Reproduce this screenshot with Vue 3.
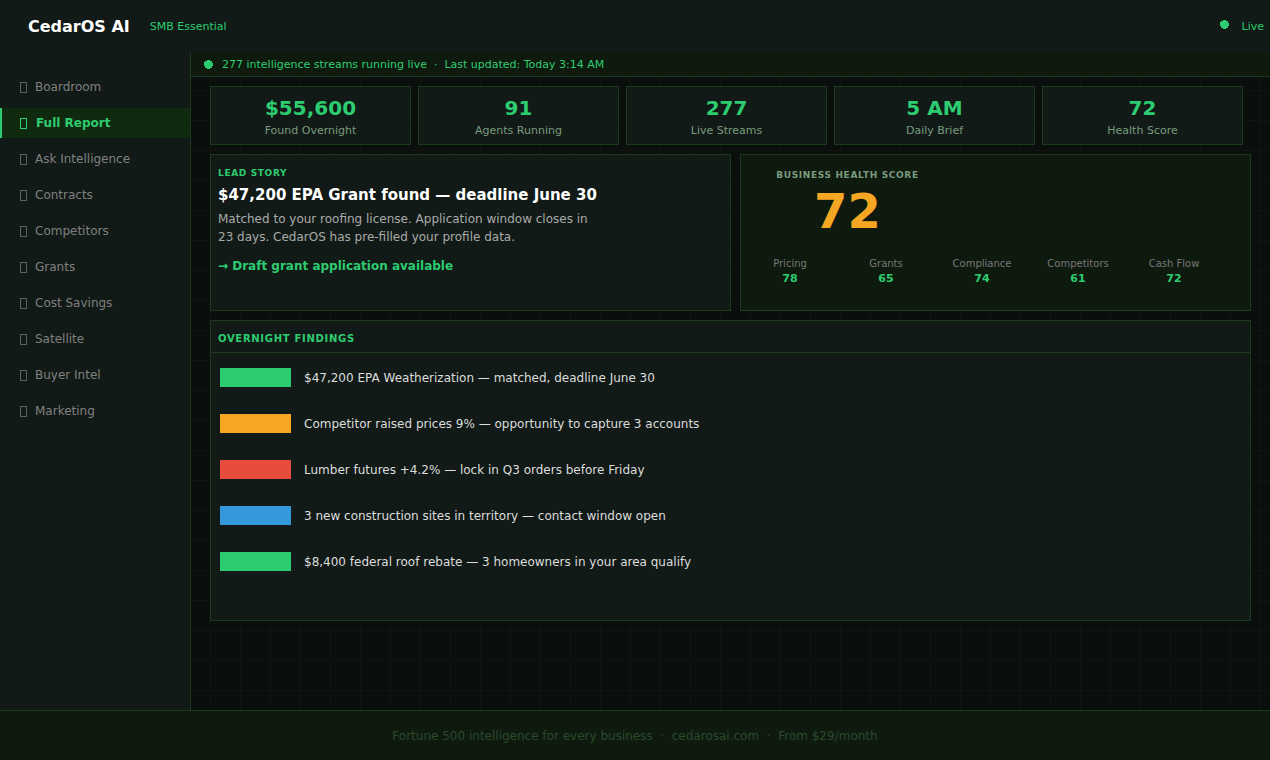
<template>
  <div class="app">
    <header class="topbar">
      <div class="brand">CedarOS AI</div>
      <div class="plan">SMB Essential</div>
      <div class="live">
        <svg class="dot" viewBox="0 0 9 9" shape-rendering="crispEdges"><circle cx="4.5" cy="4.5" r="4.5" /></svg>
        <span>Live</span>
      </div>
    </header>

    <div class="body-row">
      <aside class="sidebar">
        <a
          v-for="item in navItems"
          :key="item"
          class="nav-item"
          :class="{ active: item === 'Full Report' }"
        >
          <span class="nav-icon"></span>
          <span>{{ item }}</span>
        </a>
      </aside>

      <div class="content">
        <div class="ticker">
          <svg class="dot" viewBox="0 0 9 9" shape-rendering="crispEdges"><circle cx="4.5" cy="4.5" r="4.5" /></svg>
          <span>277 intelligence streams running live &nbsp;·&nbsp; Last updated: Today 3:14 AM</span>
        </div>

        <main class="main">
          <section class="tiles">
            <div v-for="tile in tiles" :key="tile.label" class="tile">
              <div class="tile-value">{{ tile.value }}</div>
              <div class="tile-label">{{ tile.label }}</div>
            </div>
          </section>

          <section class="panels">
            <div class="lead">
              <div class="lead-kicker">LEAD STORY</div>
              <h2 class="lead-title">$47,200 EPA Grant found — deadline June 30</h2>
              <p class="lead-text">
                Matched to your roofing license. Application window closes in
                23 days. CedarOS has pre-filled your profile data.
              </p>
              <div class="lead-action">→ Draft grant application available</div>
            </div>

            <div class="health">
              <div class="health-head">
                <div class="health-label">BUSINESS HEALTH SCORE</div>
                <div class="health-score">72</div>
              </div>
              <div class="health-grid">
                <div v-for="m in metrics" :key="m.label" class="metric">
                  <div class="metric-label">{{ m.label }}</div>
                  <div class="metric-value">{{ m.value }}</div>
                </div>
              </div>
            </div>
          </section>

          <section class="findings">
            <div class="findings-head">OVERNIGHT FINDINGS</div>
            <div class="findings-list">
              <div v-for="f in findings" :key="f.text" class="finding">
                <span class="finding-bar" :class="f.tone"></span>
                <span class="finding-text">{{ f.text }}</span>
              </div>
            </div>
          </section>
        </main>
      </div>
    </div>

    <footer class="footer">Fortune 500 intelligence for every business &nbsp;·&nbsp; cedarosai.com &nbsp;·&nbsp; From $29/month</footer>
  </div>
</template>

<script setup>
const navItems = [
  'Boardroom', 'Full Report', 'Ask Intelligence', 'Contracts', 'Competitors',
  'Grants', 'Cost Savings', 'Satellite', 'Buyer Intel', 'Marketing'
]

const tiles = [
  { value: '$55,600', label: 'Found Overnight' },
  { value: '91', label: 'Agents Running' },
  { value: '277', label: 'Live Streams' },
  { value: '5 AM', label: 'Daily Brief' },
  { value: '72', label: 'Health Score' }
]

const metrics = [
  { label: 'Pricing', value: 78 },
  { label: 'Grants', value: 65 },
  { label: 'Compliance', value: 74 },
  { label: 'Competitors', value: 61 },
  { label: 'Cash Flow', value: 72 }
]

const findings = [
  { tone: 'green', text: '$47,200 EPA Weatherization — matched, deadline June 30' },
  { tone: 'amber', text: 'Competitor raised prices 9% — opportunity to capture 3 accounts' },
  { tone: 'red', text: 'Lumber futures +4.2% — lock in Q3 orders before Friday' },
  { tone: 'blue', text: '3 new construction sites in territory — contact window open' },
  { tone: 'green', text: '$8,400 federal roof rebate — 3 homeowners in your area qualify' }
]
</script>

<style>
html, body {
  margin: 0;
  background-color: #0a0f0d;
  background-image:
    linear-gradient(#0f150f 1px, transparent 1px),
    linear-gradient(90deg, #0f150f 1px, transparent 1px);
  background-size: 30px 30px;
}
</style>

<style scoped>
.app {
  height: 760px;
  overflow: hidden;
  display: flex;
  flex-direction: column;
  font-family: 'DejaVu Sans', sans-serif;
}

.topbar {
  height: 52px;
  flex-shrink: 0;
  display: flex;
  align-items: center;
  padding: 0 6px 0 28px;
  background: #111a16;
}
.brand { font-size: 16px; font-weight: 700; color: #fff; }
.plan { margin-left: 20px; font-size: 11px; color: #2ecc71; }
.live {
  margin-left: auto;
  display: flex;
  align-items: center;
  gap: 13px;
  font-size: 11px;
  color: #2ecc71;
}
.dot {
  display: block;
  width: 9px;
  height: 9px;
  fill: #2ecc71;
}
.live .dot { margin-top: -3px; }

.body-row { flex: 1; min-height: 0; display: flex; }

.sidebar {
  width: 190px;
  flex-shrink: 0;
  padding-top: 20px;
  background: #111a16;
  border-right: 1px solid #1e3a1e;
}
.nav-item {
  height: 30px;
  margin-bottom: 6px;
  display: flex;
  align-items: center;
  gap: 8px;
  padding-left: 20px;
  font-size: 12px;
  color: #808080;
}
.nav-item.active {
  padding-left: 18px;
  background: #0f2a0f;
  border-left: 2px solid #2ecc71;
  color: #2ecc71;
  font-weight: 700;
}
/* nav glyph box */
.nav-icon {
  width: 7px;
  height: 11px;
  margin-top: 1px;
  box-sizing: border-box;
  border: 1px solid currentColor;
  opacity: 0.7;
}
.nav-item.active .nav-icon { margin-right: 1px; opacity: 1; }

.content { flex: 1; min-width: 0; display: flex; flex-direction: column; }

.ticker {
  height: 24px;
  flex-shrink: 0;
  display: flex;
  align-items: center;
  gap: 9px;
  padding-left: 13px;
  background: #0f1a0f;
  border-bottom: 1px solid #1e3a1e;
  font-size: 11px;
  color: #2ecc71;
}

.main { flex: 1; min-height: 0; padding: 9px 19px 0; }

.tiles {
  display: grid;
  grid-template-columns: repeat(5, 201px);
  column-gap: 7px;
}
.tile {
  height: 59px;
  box-sizing: border-box;
  padding-top: 9px;
  text-align: center;
  background: #111a16;
  border: 1px solid #1e3a1e;
}
.tile-value { font-size: 20px; font-weight: 700; line-height: 24px; color: #2ecc71; }
.tile-label { margin-top: 4px; font-size: 11px; line-height: 14px; color: #7a9a7e; }

.panels {
  margin-top: 9px;
  display: grid;
  grid-template-columns: 521px 511px;
  column-gap: 9px;
}
.lead, .health { height: 157px; box-sizing: border-box; border: 1px solid #1e3a1e; }
.lead { padding: 12px 7px; background: #111a16; }
.lead-kicker { font-size: 9px; font-weight: 700; letter-spacing: 0.65px; line-height: 12px; color: #2ecc71; }
.lead-title { margin: 6px 0 0; font-size: 15px; font-weight: 700; line-height: 20px; color: #fff; }
.lead-text { margin: 5px 0 0; width: 380px; font-size: 12px; line-height: 18px; color: #aaa; }
.lead-action { margin-top: 12px; font-size: 12px; font-weight: 700; line-height: 16px; color: #2ecc71; }

.health { padding-top: 14px; background: #0f1a0f; }
.health-head { width: 143px; margin-left: 35px; text-align: center; }
.health-label { font-size: 9px; font-weight: 700; letter-spacing: 0.65px; line-height: 12px; white-space: nowrap; color: #7a9a7e; }
.health-score { margin-top: 2px; font-size: 48px; font-weight: 700; line-height: 56px; color: #f5a623; }
.health-grid {
  margin: 19px 0 0 1px;
  display: grid;
  grid-template-columns: repeat(5, 96px);
  text-align: center;
}
.metric-label { font-size: 10px; line-height: 12px; color: #777; }
.metric-value { margin-top: 2px; font-size: 11px; font-weight: 700; line-height: 13px; color: #2ecc71; }

.findings {
  margin-top: 9px;
  height: 301px;
  box-sizing: border-box;
  background: #111a16;
  border: 1px solid #1e3a1e;
}
.findings-head {
  height: 32px;
  box-sizing: border-box;
  padding: 12px 7px 0;
  font-size: 10px;
  font-weight: 700;
  letter-spacing: 0.7px;
  line-height: 12px;
  color: #2ecc71;
  border-bottom: 1px solid #1e3a1e;
}
.findings-list { padding: 15px 9px 0; }
.finding {
  height: 19px;
  margin-bottom: 27px;
  display: flex;
  align-items: center;
  gap: 13px;
}
.finding-bar { width: 71px; height: 19px; flex-shrink: 0; }
.finding-bar.green { background: #2ecc71; }
.finding-bar.amber { background: #f5a623; }
.finding-bar.red { background: #e74c3c; }
.finding-bar.blue { background: #3498db; }
.finding-text { font-size: 12px; color: #ddd; }

.footer {
  height: 50px;
  flex-shrink: 0;
  box-sizing: border-box;
  display: flex;
  align-items: center;
  justify-content: center;
  background: #0f1a0f;
  border-top: 1px solid #1e3a1e;
  font-size: 12px;
  color: #2a4a2a;
}
</style>
